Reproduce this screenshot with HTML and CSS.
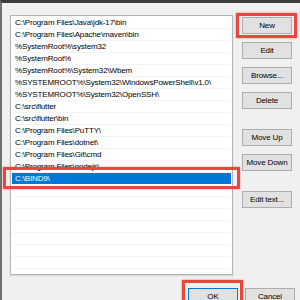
FILE: index.html
```html
<!DOCTYPE html>
<html lang="en">
<head>
    <meta charset="UTF-8">
    <title>Edit environment variable</title>
    <link rel="stylesheet" href="styles.css">
</head>
<body>
    <div class="dialog">
        <div class="main">
            <div class="path-list">
                <div class="row">C:\Program Files\Java\jdk-17\bin</div>
                <div class="row">C:\Program Files\Apache\maven\bin</div>
                <div class="row">%SystemRoot%\system32</div>
                <div class="row">%SystemRoot%</div>
                <div class="row">%SystemRoot%\System32\Wbem</div>
                <div class="row">%SYSTEMROOT%\System32\WindowsPowerShell\v1.0\</div>
                <div class="row">%SYSTEMROOT%\System32\OpenSSH\</div>
                <div class="row">C:\src\flutter</div>
                <div class="row">C:\src\flutter\bin</div>
                <div class="row">C:\Program Files\PuTTY\</div>
                <div class="row">C:\Program Files\dotnet\</div>
                <div class="row">C:\Program Files\Git\cmd</div>
                <div class="row">C:\Program Files\nodejs\</div>
                <div class="row selected marked">C:\BIND9\</div>
                <div class="row"></div>
                <div class="row"></div>
                <div class="row"></div>
                <div class="row"></div>
                <div class="row"></div>
                <div class="row"></div>
                <div class="row"></div>
            </div>

            <div class="side-buttons">
                <button class="btn marked">New</button>
                <button class="btn">Edit</button>
                <button class="btn">Browse...</button>
                <button class="btn">Delete</button>
                <button class="btn spaced">Move Up</button>
                <button class="btn">Move Down</button>
                <button class="btn spaced">Edit text...</button>
            </div>
        </div>

        <div class="footer">
            <button class="btn default marked">OK</button>
            <button class="btn">Cancel</button>
        </div>
    </div>
</body>
</html>
```

FILE: styles.css
```css
body {
    margin: 0;
    font-family: "Liberation Sans", Arial, sans-serif;
    font-size: 8px;
    letter-spacing: -0.15px;
    color: #000;
}
.dialog {
    width: 290px;
    height: 285px;
    overflow: hidden;
    background-color: #f0f0f0;
    border-top: 3px solid #3d3d3d;
    border-left: 2px solid #707070;
    padding: 12px 0 0 8px;
}
.main {
    display: flex;
    align-items: flex-start;
}
.path-list {
    width: 223px;
    height: 260px;
    box-sizing: border-box;
    border: 1px solid #b4b4b4;
    box-shadow: 0 1px 1px #d6d6d6;
    background-color: #fff;
    padding: 1px;
}
.row {
    position: relative;
    height: 12px;
    line-height: 11px;
    box-sizing: border-box;
    border-bottom: 1px solid #f4f4f4;
    padding-left: 3px;
    white-space: nowrap;
}
.row.selected {
    background-color: #0078d7;
    border-bottom-color: #fff;
    color: #fff;
}
.side-buttons {
    display: flex;
    flex-direction: column;
    gap: 8px;
    margin-left: 9px;
    padding-top: 2px;
}
.btn {
    position: relative;
    width: 50px;
    height: 17px;
    padding: 0;
    font-family: inherit;
    font-size: 8px;
    letter-spacing: inherit;
    color: #000;
    background-color: #e1e1e1;
    border: 1px solid #adadad;
}
.btn.spaced {
    margin-top: 12px;
}
.btn.default {
    border-color: #0078d7;
}
.footer {
    display: flex;
    gap: 7px;
    margin-top: 13px;
    padding-left: 178px;
}

/* red annotation boxes drawn over the screenshot */
.marked::after {
    content: "";
    position: absolute;
    border: 3px solid #e8473d;
    box-shadow: 0 0 2px rgba(120, 0, 0, 0.4);
    pointer-events: none;
}
.row.marked::after {
    top: -6px;
    bottom: -5px;
    left: -9px;
    right: -9px;
}
.btn.marked::after {
    top: -5px;
    bottom: -5px;
    left: -7px;
    right: -6px;
}
.footer .btn.marked::after {
    top: -9px;
    bottom: -20px;
    left: -7px;
    right: -6px;
}
```
